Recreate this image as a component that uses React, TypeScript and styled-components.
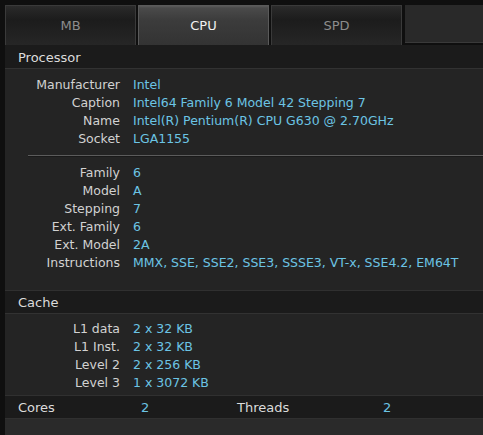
import * as React from "react";
import styled, { createGlobalStyle } from "styled-components";

const GlobalStyle = createGlobalStyle`
  html, body {
    margin: 0;
    padding: 0;
    background: #0f0f0f;
    font-family: "DejaVu Sans", Verdana, sans-serif;
  }
`;

type Row = { label: string; value: string };

const processorRows: Row[] = [
  { label: "Manufacturer", value: "Intel" },
  { label: "Caption", value: "Intel64 Family 6 Model 42 Stepping 7" },
  { label: "Name", value: "Intel(R) Pentium(R) CPU G630 @ 2.70GHz" },
  { label: "Socket", value: "LGA1155" },
];

const familyRows: Row[] = [
  { label: "Family", value: "6" },
  { label: "Model", value: "A" },
  { label: "Stepping", value: "7" },
  { label: "Ext. Family", value: "6" },
  { label: "Ext. Model", value: "2A" },
  { label: "Instructions", value: "MMX, SSE, SSE2, SSE3, SSSE3, VT-x, SSE4.2, EM64T" },
];

const cacheRows: Row[] = [
  { label: "L1 data", value: "2 x 32 KB" },
  { label: "L1 Inst.", value: "2 x 32 KB" },
  { label: "Level 2", value: "2 x 256 KB" },
  { label: "Level 3", value: "1 x 3072 KB" },
];

const Window = styled.div`
  width: 483px;
  height: 435px;
  padding: 5px 0 0 5px;
  box-sizing: border-box;
  display: flex;
  flex-direction: column;
  overflow: hidden;
`;

const TabBar = styled.div`
  display: flex;
  height: 40px;
  background: #0f0f0f;
`;

const Tab = styled.div<{ active?: boolean }>`
  width: 131px;
  margin-right: 2px;
  box-sizing: border-box;
  display: flex;
  align-items: center;
  justify-content: center;
  font-size: 13px;
  color: ${(p) => (p.active ? "#f2f2f2" : "#8c8c8c")};
  border: 1px solid ${(p) => (p.active ? "#5a5a5a" : "#3a3a3a")};
  border-bottom: none;
  background: ${(p) =>
    p.active
      ? "linear-gradient(#5a5a5a 0px, #4a4a4a 2px, #3c3c3c 14px, #333 100%)"
      : "linear-gradient(#2c2c2c 0px, #262626 4px, #1c1c1c 14px, #262626 100%)"};
`;

const TabFill = styled.div`
  flex: 1;
  margin-left: 1px;
  background: #292929;
  border-bottom: 1px solid #3a3a3a;
  margin-bottom: 2px;
`;

const Panel = styled.div`
  flex: 1;
  display: flex;
  flex-direction: column;
  background: #242424;
`;

const SectionHeader = styled.div<{ topLine?: boolean }>`
  height: 22px;
  display: flex;
  align-items: center;
  padding-left: 13px;
  font-size: 13px;
  color: #dcdcdc;
  background: #1b1b1b;
  border-top: 1px solid ${(p) => (p.topLine ? "#303030" : "#1b1b1b")};
  border-bottom: 1px solid #323232;
`;

const Grid = styled.div<{ pad: string }>`
  display: grid;
  grid-template-columns: 115px 1fr;
  column-gap: 13px;
  grid-auto-rows: 18px;
  padding: ${(p) => p.pad};
  font-size: 12.5px;
  align-items: center;
`;

const Label = styled.div`
  text-align: right;
  color: #d2d2d2;
  white-space: nowrap;
`;

const Value = styled.div`
  color: #6cc4e4;
  white-space: nowrap;
`;

const Divider = styled.div`
  height: 1px;
  margin-left: 23px;
  background: #5c5c5c;
  border-bottom: 1px solid #1a1a1a;
`;

const CountBar = styled.div`
  height: 22px;
  display: grid;
  grid-template-columns: 123px 96px 146px 1fr;
  align-items: center;
  padding-left: 13px;
  font-size: 13px;
  background: #1b1b1b;
  border-top: 1px solid #303030;
  border-bottom: 1px solid #303030;
`;

const CountLabel = styled.span`
  color: #dcdcdc;
`;

const CountValue = styled.span`
  color: #6cc4e4;
`;

const Footer = styled.div`
  flex: 1;
  background: #2a2a2a;
`;

const InfoGrid = ({ rows, pad }: { rows: Row[]; pad: string }) => (
  <Grid pad={pad}>
    {rows.map((r) => (
      <React.Fragment key={r.label}>
        <Label>{r.label}</Label>
        <Value>{r.value}</Value>
      </React.Fragment>
    ))}
  </Grid>
);

const App: React.FC = () => {
  return (
    <>
      <GlobalStyle />
      <Window>
        <TabBar>
          <Tab>MB</Tab>
          <Tab active>CPU</Tab>
          <Tab>SPD</Tab>
          <TabFill />
        </TabBar>
        <Panel>
          <SectionHeader>Processor</SectionHeader>
          <InfoGrid rows={processorRows} pad="6px 0 8px 0" />
          <Divider />
          <InfoGrid rows={familyRows} pad="6px 0 19px 0" />
          <SectionHeader topLine>Cache</SectionHeader>
          <InfoGrid rows={cacheRows} pad="5px 0 4px 0" />
          <CountBar>
            <CountLabel>Cores</CountLabel>
            <CountValue>2</CountValue>
            <CountLabel>Threads</CountLabel>
            <CountValue>2</CountValue>
          </CountBar>
          <Footer />
        </Panel>
      </Window>
    </>
  );
};

export default App;
